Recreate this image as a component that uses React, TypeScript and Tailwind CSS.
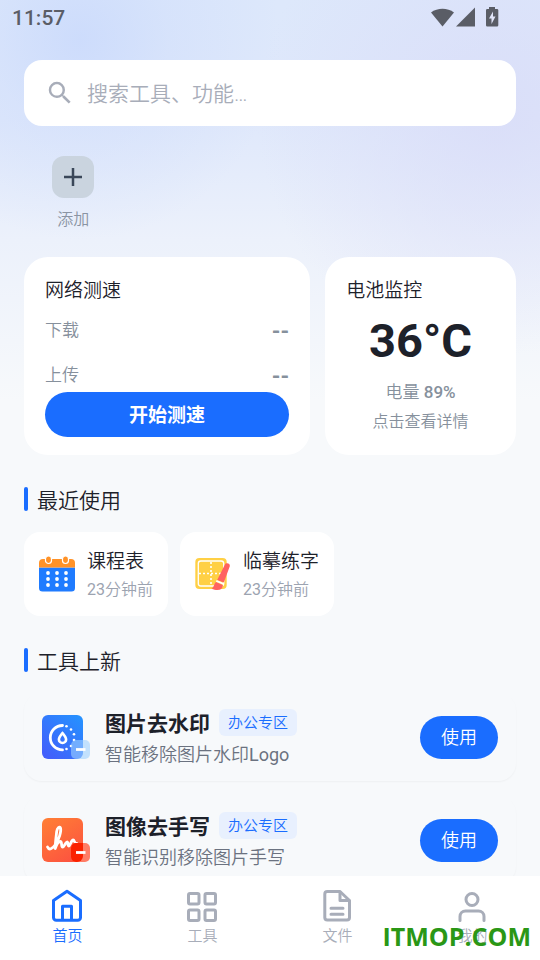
import React from 'react';
import { MdSearch } from 'react-icons/md';

const HomeIcon = () => (
  <svg viewBox="1 0 36 36" className="w-9 h-9" fill="none" stroke="currentColor" strokeWidth="3" strokeLinejoin="round">
    <path d="M4.5 12.5 18 3.2l13.5 9.3v17a2.8 2.8 0 0 1-2.8 2.8H7.3a2.8 2.8 0 0 1-2.8-2.8z" />
    <path d="M13.5 32V18.2h9V32" />
  </svg>
);

const GridIcon = () => (
  <svg viewBox="1 0 36 36" className="w-9 h-9" fill="none" stroke="currentColor" strokeWidth="3">
    <rect x="4.5" y="5.5" width="10.5" height="10.5" rx="1.5" />
    <rect x="21" y="5.5" width="10.5" height="10.5" rx="1.5" />
    <rect x="4.5" y="22" width="10.5" height="10.5" rx="1.5" />
    <rect x="21" y="22" width="10.5" height="10.5" rx="1.5" />
  </svg>
);

const FileIcon = () => (
  <svg viewBox="1 0 36 36" className="w-9 h-9" fill="none" stroke="currentColor" strokeWidth="3" strokeLinejoin="round" strokeLinecap="round">
    <path d="M8.3 3.5h12.7l9.5 9v17a2.5 2.5 0 0 1-2.5 2.5H8.3a2.5 2.5 0 0 1-2.5-2.5V6a2.5 2.5 0 0 1 2.5-2.5z" />
    <path d="M21 4v8.5h9" />
    <path d="M12 20.2h12M12 26.2h12" />
  </svg>
);

const UserIcon = () => (
  <svg viewBox="1 0 36 36" className="w-9 h-9" fill="none" stroke="currentColor" strokeWidth="3" strokeLinecap="round">
    <circle cx="18" cy="11.5" r="6" />
    <path d="M6 32.5v-4a5.5 5.5 0 0 1 5.5-5.5h13a5.5 5.5 0 0 1 5.5 5.5v4" />
  </svg>
);

const CalendarIcon = () => (
  <svg viewBox="0 0 36 36" className="w-9 h-9 shrink-0">
    <path d="M0 11.5h36V32a3.5 3.5 0 0 1-3.5 3.5h-29A3.5 3.5 0 0 1 0 32z" fill="#1f7bff" />
    <path d="M4 3h28a4 4 0 0 1 4 4v4.5H0V7a4 4 0 0 1 4-4z" fill="#ff9228" />
    <rect x="6.5" y="0" width="6" height="7.5" rx="3" fill="#ff9228" stroke="#fff" strokeWidth="1.2" />
    <rect x="23.5" y="0" width="6" height="7.5" rx="3" fill="#ff9228" stroke="#fff" strokeWidth="1.2" />
    {[17, 23, 29].map((y) => [9, 18, 27].map((x) => <circle key={`${x}-${y}`} cx={x} cy={y} r="1.9" fill="#fff" />))}
  </svg>
);

const PracticeIcon = () => (
  <svg viewBox="0 0 36 36" className="w-9 h-9 shrink-0">
    <rect x="0.3" y="2" width="31.4" height="31" rx="4" fill="#ffd045" />
    <rect x="3.3" y="5" width="25.4" height="25" rx="2.5" fill="none" stroke="#fff" strokeWidth="1.3" />
    <path d="M16 6v24M4 17.5h24" stroke="#fff" strokeWidth="1.6" strokeDasharray="2 2" />
    <path d="M29.8 8.8c1-2.6 5.7-1.6 5 1.4l-6 16.3-6.6-2.5z" fill="#ff6260" />
    <path d="M21 26l7 3.2c-.5 4.8-5 6.3-11.5 3.5 2.5-1.2 2.5-5.2 4.5-6.7z" fill="#ff6260" />
    <path d="M21.3 24.8l7.6 3.2" stroke="#fff" strokeWidth="1.8" />
  </svg>
);

const WatermarkIcon = () => (
  <svg viewBox="0 0 48 44" className="w-12 h-11 shrink-0">
    <defs>
      <linearGradient id="blueTile" x1="1" y1="0" x2="0.2" y2="1">
        <stop offset="0" stopColor="#2494ff" />
        <stop offset="1" stopColor="#425ffb" />
      </linearGradient>
    </defs>
    <rect width="41" height="44" rx="6" fill="url(#blueTile)" />
    <path d="M20.5 10.5a12.2 12.2 0 0 0 0 24.4" fill="none" stroke="#fff" strokeWidth="2.8" strokeLinecap="round" />
    <g fill="#fff">
      <circle cx="24.5" cy="11.3" r="1.3" />
      <circle cx="29" cy="14.5" r="1.3" />
      <circle cx="32" cy="19.3" r="1.3" />
      <circle cx="32" cy="25" r="1.3" />
      <circle cx="29" cy="31" r="1.3" />
      <circle cx="24.5" cy="34" r="1.3" />
    </g>
    <path d="M20.5 18.2c2.2 2.6 3.6 4.3 3.6 6.200a3.600 3.600 0 0 1-7.200 0c0-1.900 1.400-3.600 3.600-6.200z" fill="none" stroke="#fff" strokeWidth="2.6" />
    <rect x="29" y="25" width="19" height="19" rx="5" fill="#9fd0ff" fillOpacity="0.6" />
    <path d="M34 34.5h9.5" stroke="#fff" strokeWidth="2.8" />
  </svg>
);

const HandwritingIcon = () => (
  <svg viewBox="0 0 48 44" className="w-12 h-11 shrink-0">
    <defs>
      <linearGradient id="orangeTile" x1="0.2" y1="0" x2="0.8" y2="1">
        <stop offset="0" stopColor="#ff7c36" />
        <stop offset="1" stopColor="#fc5240" />
      </linearGradient>
    </defs>
    <rect width="41" height="44" rx="6" fill="url(#orangeTile)" />
    <path
      d="M5.500 29c1.500 3.500 5 2 8-2.500 3.500-5 6-13 5-16.500-.8-2-3.300-.5-3.800 3.500-.7 6-1.500 12-1.500 17 1.500-4.500 3-7 5-7 2.300 0 .5 5.500 2.500 5.500 1.500 0 2.500-4.500 4.300-5 1.300-.3.500 4 1.700 4 1.500 0 2.500-6 4.500-6 1.500 0 .8 3.500 3.500 3.500"
      fill="none" stroke="#fff" strokeWidth="2.8" strokeLinecap="round" strokeLinejoin="round"
    />
    <rect x="29" y="25" width="19" height="19" rx="5" fill="#ff7d66" />
    <path d="M34 25h7v13a6 6 0 0 1-6 6h-1a5 5 0 0 1-5-5v-9a5 5 0 0 1 5-5z" fill="#fb2200" />
    <path d="M34 34.5h9.5" stroke="#fff" strokeWidth="2.8" />
  </svg>
);

const speedRows = ['下载', '上传'];

const recent = [
  { name: '课程表', minutes: 23, icon: CalendarIcon },
  { name: '临摹练字', minutes: 23, icon: PracticeIcon },
];

const newTools = [
  { name: '图片去水印', tag: '办公专区', desc: <>智能移除图片水印<span className="font-normal">Logo</span></>, icon: WatermarkIcon },
  { name: '图像去手写', tag: '办公专区', desc: '智能识别移除图片手写', icon: HandwritingIcon },
];

const tabs = [
  { name: '首页', icon: HomeIcon, active: true },
  { name: '工具', icon: GridIcon, active: false },
  { name: '文件', icon: FileIcon, active: false },
  { name: '我的', icon: UserIcon, active: false },
];

const StatusBar = () => (
  <div className="flex h-9 items-center justify-between pl-3 pr-10 text-[#5a5d66]">
    <span className="pt-0.5 text-[21px] font-medium">11:57</span>
    <svg viewBox="0 0 70 22" className="h-[22px] w-[70px]" fill="currentColor">
      <path d="M1 5.5C7.5.5 17.5.5 24 5.5L12.5 19.5z" />
      <path d="M45 .5v19H26z" />
      <path d="M59 0h6v2h2a1.3 1.3 0 0 1 1.3 1.3v14.9a1.3 1.3 0 0 1-1.3 1.3H57.3a1.3 1.3 0 0 1-1.3-1.3V3.3A1.3 1.3 0 0 1 57.3 2H59z" />
      <path d="M63 4.5l-4 7h2.5v5.5l4-7.5H63z" fill="#e0e4f8" />
    </svg>
  </div>
);

const SectionTitle = ({ children }: { children: React.ReactNode }) => (
  <h2 className="flex h-6 items-start gap-[9px] text-[21px] leading-7 text-[#1d212a]">
    <span className="h-6 w-1 rounded-xs bg-[#1a6dff]" />
    {children}
  </h2>
);

const App: React.FC = () => {
  return (
    <div className="relative flex h-screen flex-col overflow-hidden bg-[#f7f9fb] bg-[radial-gradient(circle_at_80px_40px,#c9d9fccc_0,#c9d9fc55_90px,#c9d9fc00_200px),radial-gradient(circle_at_92%_115px,#d9dcf8cc_0,#d9dcf866_120px,#d9dcf800_240px),linear-gradient(#dde8fb_0,#dfe8fb_120px,#ecf1fb_240px,#f7f9fb_400px)] font-[Roboto,'Noto_Sans_CJK_SC',sans-serif] font-[350]">
      <StatusBar />

      <main className="flex-1 overflow-y-auto px-6 pt-6 pb-4 [scrollbar-width:none]">
        {/* Search */}
        <label className="flex h-[66px] items-center gap-3 rounded-[18px] bg-white px-[21px]">
          <MdSearch size={30} className="shrink-0 text-[#a8adb9]" />
          <input
            type="text"
            aria-label="搜索"
            placeholder="搜索工具、功能…"
            className="min-w-0 flex-1 pt-1 text-[21px] outline-none placeholder:text-[#a8adb9]"
          />
        </label>

        {/* Shortcuts */}
        <div className="mt-[30px] grid grid-cols-5">
          <button className="flex flex-col items-center gap-2.5">
            <span className="flex size-[42px] items-center justify-center rounded-xl bg-[#cad4df]">
              <svg viewBox="0 0 18 18" className="size-[18px]" stroke="#3a4759" strokeWidth="2.5">
                <path d="M9 0v18M0 9h18" />
              </svg>
            </span>
            <span className="text-base leading-6 text-[#8a94a3]">添加</span>
          </button>
        </div>

        {/* Speed and battery */}
        <div className="mt-[25px] grid grid-cols-[3fr_2fr] gap-[15px]">
          <section className="rounded-3xl bg-white px-[21px] pt-5 pb-[18px]">
            <h3 className="mb-[9px] text-[19px] leading-7 text-[#1d212a]">网络测速</h3>
            <dl className="flex flex-col gap-3">
              {speedRows.map((row) => (
                <div key={row} className="flex h-[33px] items-center justify-between text-[#86909c]">
                  <dt className="text-[17px]">{row}</dt>
                  <dd className="pt-0.5 text-[22px] font-bold">--</dd>
                </div>
              ))}
            </dl>
            <button className="h-[45px] w-full rounded-full bg-[#1a6dff] pt-1 text-[19px] font-bold text-white">开始测速</button>
          </section>
          <section className="flex flex-col items-center rounded-3xl bg-white px-[21px] pt-5 pb-[18px]">
            <h3 className="self-start text-[19px] leading-7 text-[#1d212a]">电池监控</h3>
            <p className="mt-2 text-[47px] leading-[56px] font-bold text-[#1d212a]">36°C</p>
            <p className="mt-2 text-[17px] leading-[30px] text-[#86909c]">
              电量 <span className="font-medium">89%</span>
            </p>
            <p className="text-base leading-[30px] text-[#86909c]">点击查看详情</p>
          </section>
        </div>

        {/* Recently used */}
        <div className="mt-8">
          <SectionTitle>最近使用</SectionTitle>
          <div className="mt-[21px] flex gap-3">
            {recent.map((item) => {
              const Icon = item.icon;
              return (
                <a key={item.name} href="#" className="flex items-center gap-3 rounded-2xl bg-white px-[15px] py-3">
                  <Icon />
                  <div className="pt-1">
                    <p className="text-[19px] leading-7 text-[#1d212a]">{item.name}</p>
                    <p className="text-base leading-7 text-[#9ca3b0]"><span className="font-normal">{item.minutes}</span>分钟前</p>
                  </div>
                </a>
              );
            })}
          </div>
        </div>

        {/* New tools */}
        <div className="mt-8">
          <SectionTitle>工具上新</SectionTitle>
          <div className="mt-[21px] flex flex-col gap-[15px]">
            {newTools.map((tool) => {
              const Icon = tool.icon;
              return (
                <div key={tool.name} className="flex h-[88px] items-center gap-[15px] rounded-[18px] px-[18px] shadow-[0_1px_2px_#0000000a]">
                  <Icon />
                  <div className="min-w-0 flex-1 pt-1.5">
                    <div className="flex items-start gap-[9px]">
                      <h3 className="text-[21px] leading-[30px] font-bold text-[#1d212a]">{tool.name}</h3>
                      <span className="h-[27px] rounded-md bg-[#e8f0fe] px-[9px] text-[15px] leading-7 text-[#1a6dff]">{tool.tag}</span>
                    </div>
                    <p className="text-lg leading-8 text-[#6b7280]">{tool.desc}</p>
                  </div>
                  <button className="h-[43px] rounded-full bg-[#1a6dff] px-[21px] pt-0.5 text-lg text-white">使用</button>
                </div>
              );
            })}
          </div>
        </div>
      </main>

      {/* Tab bar */}
      <nav className="grid h-[84px] shrink-0 grid-cols-4 bg-white">
        {tabs.map((tab) => {
          const Icon = tab.icon;
          return (
            <a key={tab.name} href="#" className={`flex flex-col items-center pt-3 ${tab.active ? 'text-[#1a6dff]' : 'text-[#a8adb9]'}`}>
              <Icon />
              <span className="text-[15px] leading-6">{tab.name}</span>
            </a>
          );
        })}
      </nav>

      <span className="absolute right-[9px] bottom-[5px] font-['Open_Sans',sans-serif] text-[25px] font-bold text-[#2a9716]">ITMOP.COM</span>
    </div>
  );
};

export default App;
